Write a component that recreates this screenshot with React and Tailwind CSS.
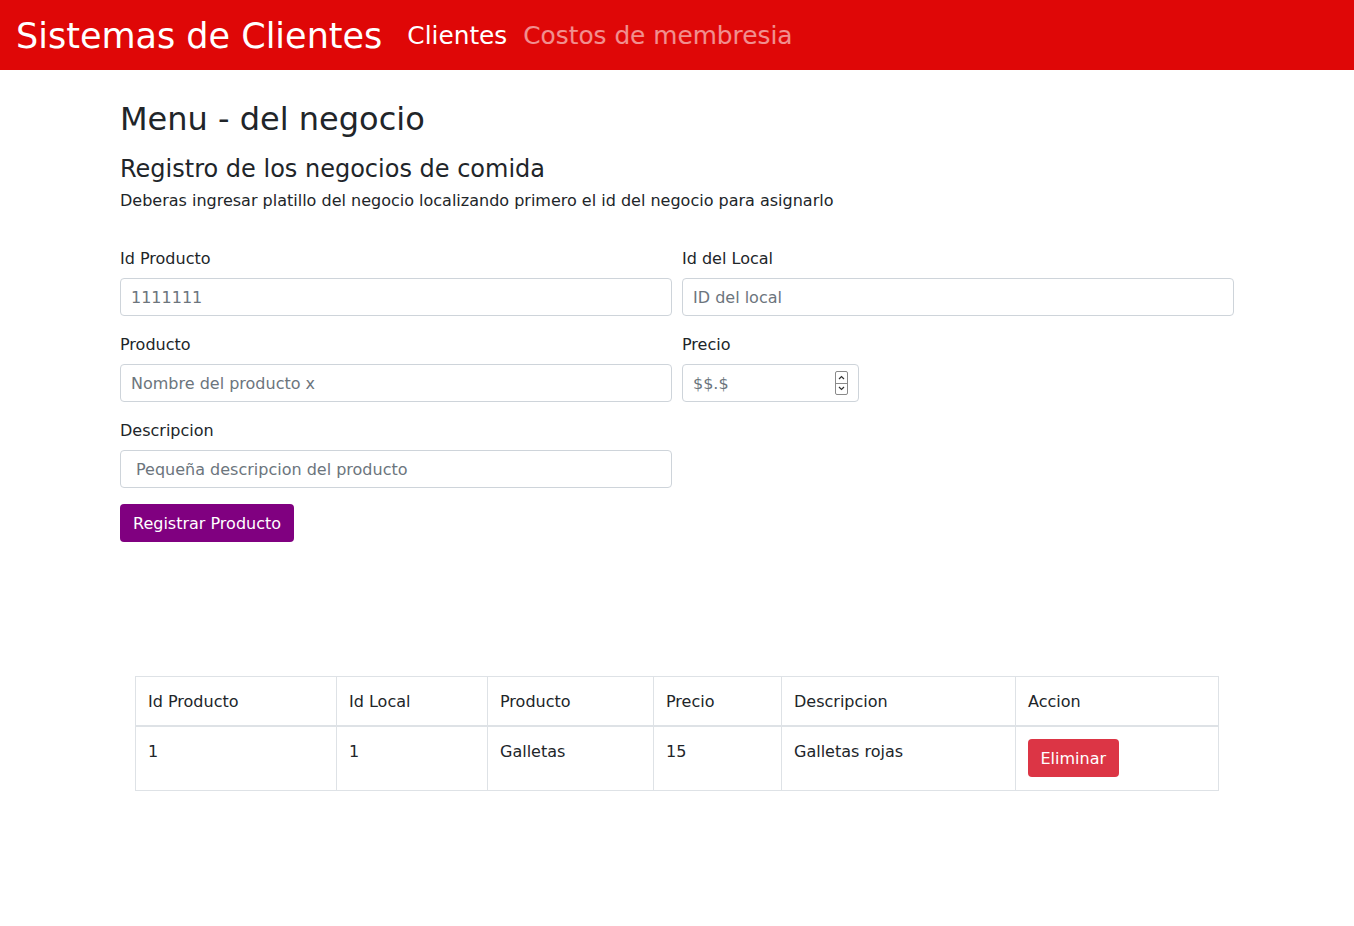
import { useState } from "react";

const rows = [
  { id: 1, local: 1, producto: "Galletas", precio: 15, descripcion: "Galletas rojas" },
];

function Field({ label, placeholder, className = "", inputClass = "" }) {
  return (
    <div className={className}>
      <label className="block pt-[1px] mb-[7px] text-base leading-6 text-[#212529]">{label}</label>
      <input
        placeholder={placeholder}
        className={`block h-[38px] w-full rounded-[4px] border border-[#ced4da] bg-white px-[10px] text-base text-[#212529] placeholder:text-[#6c757d] outline-none ${inputClass}`}
      />
    </div>
  );
}

export default function App() {
  const [items, setItems] = useState(rows);

  return (
    <div className="min-h-[926px] bg-white text-[#212529] font-['DejaVu_Sans',sans-serif]">
      {/* Navbar */}
      <nav className="h-[70px] bg-[#df0707] flex items-center px-4 pt-[2px]">
        <span className="text-[35px] leading-none text-white mr-[25px] whitespace-nowrap">
          Sistemas de Clientes
        </span>
        <a className="text-[24.8px] text-white mr-[16px] whitespace-nowrap">Clientes</a>
        <a className="text-[24.8px] text-white/55 whitespace-nowrap">Costos de membresia</a>
      </nav>

      <div className="w-[1114px] ml-[120px]">
        <h2 className="text-[32px] leading-[38px] mt-[30px] font-normal">Menu - del negocio</h2>
        <h4 className="text-2xl leading-[29px] mt-[17px]">Registro de los negocios de comida</h4>
        <p className="text-base leading-6 mt-[5px]">
          Deberas ingresar platillo del negocio localizando primero el id del negocio para asignarlo
        </p>

        {/* Form */}
        <div className="mt-[33px] grid grid-cols-[552px_552px] gap-x-[10px] gap-y-4">
          <Field label="Id Producto" placeholder="1111111" />
          <Field label="Id del Local" placeholder="ID del local" />
          <Field label="Producto" placeholder="Nombre del producto x" />
          <div>
            <label className="block pt-[1px] mb-[7px] text-base leading-6">Precio</label>
            <div className="relative w-[177px]">
              <input
                placeholder="$$.$"
                className="block h-[38px] w-full rounded-[4px] border border-[#ced4da] bg-white px-[10px] text-base placeholder:text-[#6c757d] outline-none"
              />
              <div className="absolute right-[11px] top-[7px] w-[13px] h-[24px] flex flex-col border border-[#8a8a8a] rounded-[2px] overflow-hidden">
                <div className="flex-1 flex items-center justify-center border-b border-[#8a8a8a]">
                  <svg width="7" height="5" viewBox="0 0 7 5"><path d="M1 4 L3.5 1.5 L6 4" stroke="#333" strokeWidth="1.2" fill="none" /></svg>
                </div>
                <div className="flex-1 flex items-center justify-center">
                  <svg width="7" height="5" viewBox="0 0 7 5"><path d="M1 1 L3.5 3.5 L6 1" stroke="#333" strokeWidth="1.2" fill="none" /></svg>
                </div>
              </div>
            </div>
          </div>
          <Field label="Descripcion" placeholder="Pequeña descripcion del producto" inputClass="px-[15px]" />
          <div />
        </div>

        <button className="mt-4 h-[38px] px-[13px] pt-[2px] rounded-[4px] bg-[#800080] text-white text-base">
          Registrar Producto
        </button>
      </div>

      {/* Table */}
      <div className="mt-[134px] ml-[135px] w-[1084px]">
        <table className="w-full border-collapse text-base">
          <thead>
            <tr>
              {[
                ["Id Producto", "w-[201px]"],
                ["Id Local", "w-[151px]"],
                ["Producto", "w-[166px]"],
                ["Precio", "w-[128px]"],
                ["Descripcion", "w-[234px]"],
                ["Accion", ""],
              ].map(([h, w]) => (
                <th
                  key={h}
                  className={`${w} text-left font-normal h-[49px] px-3 pt-[2px] border border-[#dee2e6] border-b-2 border-b-[#dee2e6] align-middle`}
                >
                  {h}
                </th>
              ))}
            </tr>
          </thead>
          <tbody>
            {items.map((r) => (
              <tr key={r.id}>
                <td className="px-3 pt-[13px] pb-[12px] border border-[#dee2e6] align-top leading-6">{r.id}</td>
                <td className="px-3 pt-[13px] pb-[12px] border border-[#dee2e6] align-top leading-6">{r.local}</td>
                <td className="px-3 pt-[13px] pb-[12px] border border-[#dee2e6] align-top leading-6">{r.producto}</td>
                <td className="px-3 pt-[13px] pb-[12px] border border-[#dee2e6] align-top leading-6">{r.precio}</td>
                <td className="px-3 pt-[13px] pb-[12px] border border-[#dee2e6] align-top leading-6">{r.descripcion}</td>
                <td className="px-3 pt-3 pb-[13px] border border-[#dee2e6] align-top">
                  <button
                    onClick={() => setItems(items.filter((i) => i.id !== r.id))}
                    className="h-[38px] px-[12.5px] pt-[2px] rounded-[4px] bg-[#dc3545] text-white text-base"
                  >
                    Eliminar
                  </button>
                </td>
              </tr>
            ))}
          </tbody>
        </table>
      </div>
    </div>
  );
}
